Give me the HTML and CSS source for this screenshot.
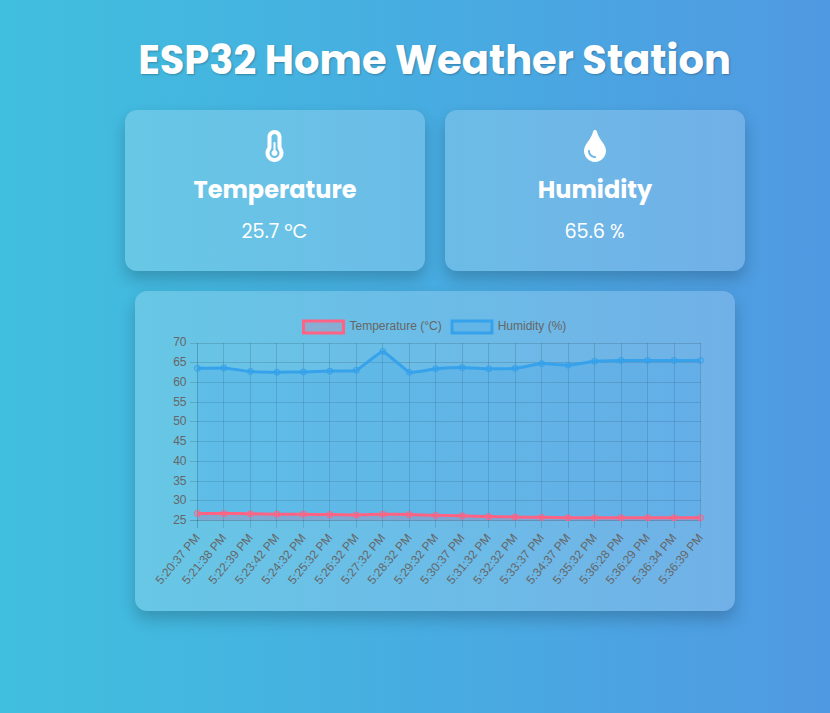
FILE: index.html
```html
<!DOCTYPE html>
<html lang="en">
<head>
<meta charset="utf-8">
<title>ESP32 Home Weather Station</title>
<link rel="stylesheet" href="styles.css">
</head>
<body>
<main class="station">
  <h1 class="title">ESP32 Home Weather Station</h1>
  <section class="cards">
    <article class="card">
      <svg class="icon" viewBox="-88 0 512 512" aria-hidden="true">
        <path fill="#fff" d="M160 64c-26.500 0-48 21.500-48 48V276.500c0 17.300-7.100 31.900-15.300 42.500C86.200 332.600 80 349.500 80 368c0 44.200 35.800 80 80 80s80-35.800 80-80c0-18.500-6.200-35.400-16.700-48.900c-8.200-10.600-15.300-25.200-15.300-42.500V112c0-26.500-21.500-48-48-48zM48 112C48 50.200 98.100 0 160 0s112 50.100 112 112V276.500c0 .1 .1 .3 .2 .6c.2 .6 .8 1.600 1.700 2.800c18.900 24.400 30.100 55 30.100 88.100c0 79.500-64.500 144-144 144S16 447.500 16 368c0-33.200 11.200-63.800 30.100-88.100c.9-1.200 1.500-2.200 1.700-2.800c.1-.3 .2-.5 .2-.6V112zM208 368c0 26.500-21.500 48-48 48s-48-21.500-48-48c0-20.900 13.400-38.700 32-45.300V208c0-8.800 7.200-16 16-16s16 7.200 16 16V322.700c18.600 6.600 32 24.400 32 45.300z"/>
      </svg>
      <h2 class="name">Temperature</h2>
      <p class="value">25.7 ºC</p>
    </article>
    <article class="card">
      <svg class="icon" viewBox="-80 0 512 512" aria-hidden="true">
        <path fill="#fff" fill-rule="evenodd" d="M205.220 22.090c-7.940-28.780-49.440-30.120-58.440 0C100.010 179.850 0 222.720 0 333.910 0 432.350 78.720 512 176 512s176-79.650 176-178.090c0-111.750-99.790-153.340-146.780-311.820zM176 448c-61.750 0-112-50.250-112-112 0-8.840 7.160-16 16-16s16 7.160 16 16c0 44.110 35.890 80 80 80 8.840 0 16 7.160 16 16s-7.160 16-16 16z"/>
      </svg>
      <h2 class="name">Humidity</h2>
      <p class="value">65.6 %</p>
    </article>
  </section>
  <section class="chart-panel">
    <svg class="chart" id="chart" viewBox="0 0 560 280" role="img"></svg>
  </section>
</main>
<script src="chart.js"></script>
</body>
</html>
```
FILE: styles.css
```css
* {
  box-sizing: border-box;
}

body {
  margin: 0;
  min-height: 713px;
  overflow: hidden;
  background: linear-gradient(to right, #40bfde, #47ade1 50%, #5099e2);
  color: #fff;
  font-family: "Poppins", "Inter", sans-serif;
}

.station {
  width: 870px;
  padding-top: 30px;
  display: flex;
  flex-direction: column;
  align-items: center;
}

.title {
  margin: 0 1px 20px 0;
  font-size: 40px;
  line-height: 60px;
  font-weight: 700;
  white-space: nowrap;
  text-shadow: 1px 1px 2px rgba(0, 0, 0, 0.25);
}

.cards {
  display: flex;
  gap: 20px;
  margin-bottom: 20px;
}

.card,
.chart-panel {
  background: rgba(255, 255, 255, 0.2);
  border-radius: 12px;
  box-shadow: 0 8px 16px rgba(0, 0, 0, 0.2);
}

.card {
  width: 300px;
  height: 161px;
  padding-top: 20px;
  display: flex;
  flex-direction: column;
  align-items: center;
}

.icon {
  width: 32px;
  height: 32px;
}

.name {
  margin: 10px 0 0;
  font-size: 24px;
  line-height: 36px;
  font-weight: 700;
}

.value {
  margin: 9px 1px 0 0;
  font-size: 19.2px;
  line-height: 29px;
}

.chart-panel {
  width: 600px;
  height: 320px;
  padding: 20px;
}

.chart {
  display: block;
  overflow: visible;
  width: 560px;
  height: 280px;
  font: 12px "Liberation Sans", Arial, sans-serif;
}

.grid {
  stroke: rgba(0, 0, 0, 0.13);
  stroke-width: 1;
}

.axis {
  stroke: rgba(0, 0, 0, 0.2);
}

.label {
  fill: #666;
}

.end {
  text-anchor: end;
}

.line {
  fill: none;
  stroke-width: 3;
}

.temperature {
  stroke: rgb(255, 99, 132);
  fill: rgba(255, 99, 132, 0.2);
}

.humidity {
  stroke: rgb(54, 162, 235);
  fill: rgba(54, 162, 235, 0.2);
}

.area.temperature,
.area.humidity {
  stroke: none;
}

.line.temperature,
.line.humidity {
  fill: none;
}

.swatch {
  stroke-width: 3;
}
```
FILE: chart.js
```js
const chart = document.getElementById("chart");
const left = 42.5, right = 545.5, top_ = 32.1, bottom = 209.5;

const times = ["5:20:37", "5:21:38", "5:22:39", "5:23:42", "5:24:32", "5:25:32", "5:26:32",
  "5:27:32", "5:28:32", "5:29:32", "5:30:37", "5:31:32", "5:32:32", "5:33:37", "5:34:37",
  "5:35:32", "5:36:28", "5:36:29", "5:36:34", "5:36:39"];
const humidity = [63.6, 63.7, 62.8, 62.6, 62.7, 62.9, 63.1, 67.9, 62.6, 63.5, 63.8, 63.5, 63.6,
  64.8, 64.4, 65.4, 65.6, 65.6, 65.6, 65.6];
const temperature = [26.8, 26.8, 26.7, 26.6, 26.6, 26.5, 26.4, 26.6, 26.5, 26.3, 26.2, 26,
  25.9, 25.8, 25.7, 25.7, 25.7, 25.7, 25.7, 25.7];

const xAt = i => left + (right - left) * i / 19;
const yAt = v => bottom - (v - 25) * (bottom - top_) / 45;
const snap = n => Math.floor(n) + 0.5;

function add(tag, cls, attrs, text) {
  const node = document.createElementNS("http://www.w3.org/2000/svg", tag);
  node.setAttribute("class", cls);
  for (const key in attrs) node.setAttribute(key, attrs[key]);
  if (text) node.textContent = text;
  chart.appendChild(node);
}

// Smooth curve whose control points follow the neighbouring points.
function curve(points) {
  const t = 0.1;
  let d = `M${points[0]}`;
  for (let i = 0; i < points.length - 1; i++) {
    const a = points[Math.max(i - 1, 0)], b = points[i];
    const c = points[i + 1], e = points[Math.min(i + 2, points.length - 1)];
    d += `C${b[0] + (c[0] - a[0]) * t / 2},${b[1] + (c[1] - a[1]) * t / 2}` +
      ` ${c[0] - (e[0] - b[0]) * t / 2},${c[1] - (e[1] - b[1]) * t / 2} ${c}`;
  }
  return d;
}

function series(values, cls) {
  const points = values.map((v, i) => [xAt(i), yAt(v)]);
  const d = curve(points);
  add("path", `area ${cls}`, { d: `${d}L${right},${bottom}L${left},${bottom}Z` });
  add("path", `line ${cls}`, { d });
  points.forEach(p => add("circle", cls, { cx: p[0], cy: p[1], r: 3 }));
}

times.forEach((time, i) => {
  const x = snap(xAt(i));
  add("line", i ? "grid" : "grid axis", { x1: x, x2: x, y1: 32, y2: 217 });
  add("text", "label end", { transform: `translate(${xAt(i)} 224.500) rotate(-50)`, y: 4 }, `${time} PM`);
});
for (let v = 25; v <= 70; v += 5) {
  const y = snap(yAt(v));
  add("line", v > 25 ? "grid" : "grid axis", { x1: 35, x2: 546, y1: y, y2: y });
  add("text", "label end", { x: 31.5, y: v < 70 ? y + 3.5 : y + 2.5 }, String(v));
}
series(humidity, "humidity");
series(temperature, "temperature");

add("rect", "swatch temperature", { x: 148.5, y: 10, width: 40, height: 12 });
add("text", "label", { x: 194.5, y: 19 }, "Temperature (°C)");
add("rect", "swatch humidity", { x: 297, y: 10, width: 40, height: 12 });
add("text", "label", { x: 342.7, y: 19 }, "Humidity (%)");
```
